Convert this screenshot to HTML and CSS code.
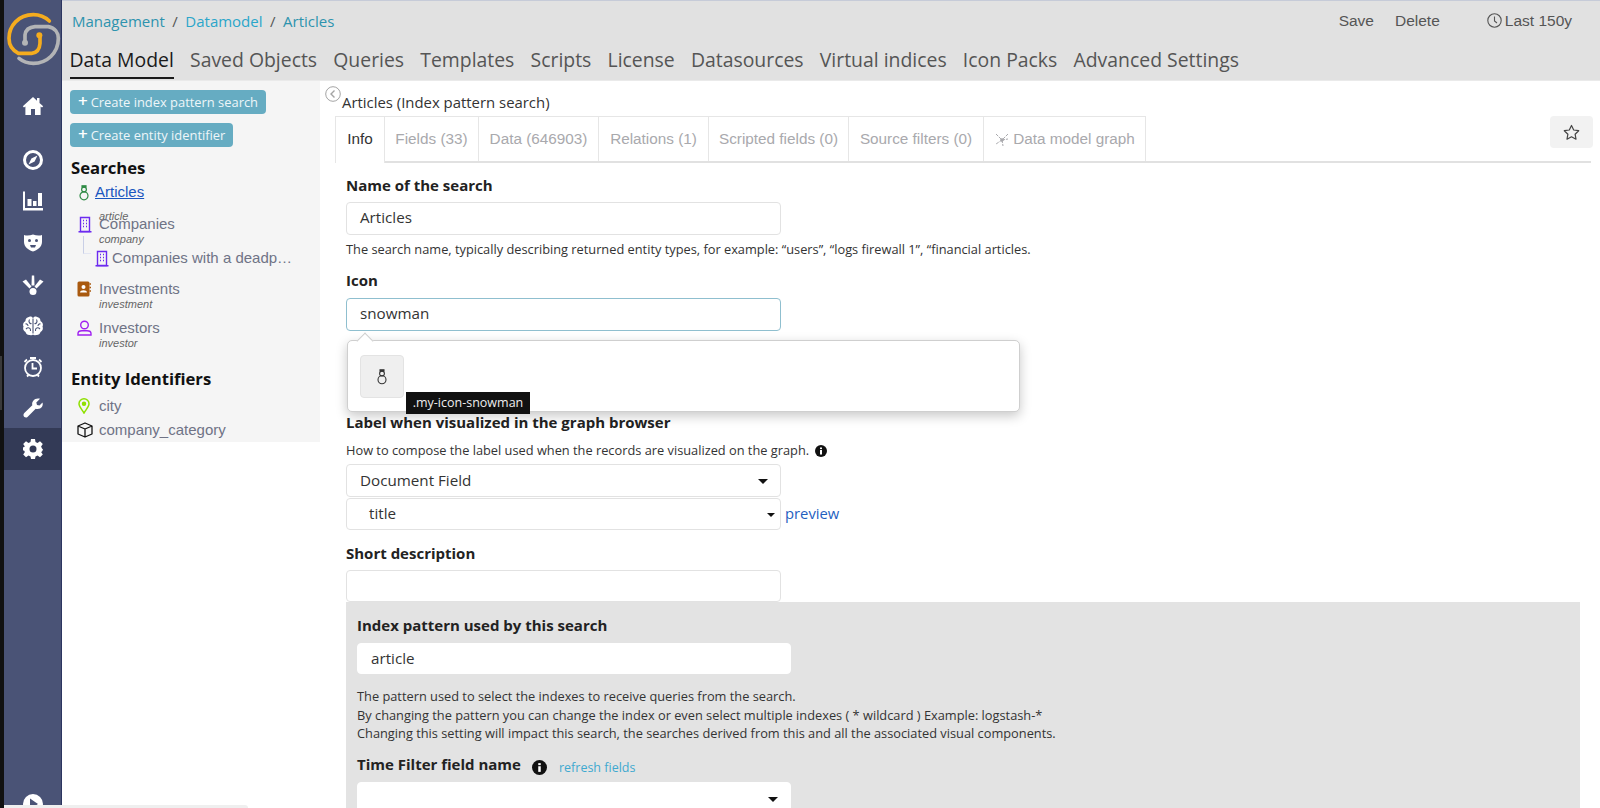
FILE: index.html
```html
<!DOCTYPE html>
<html lang="en">
<head>
<meta charset="utf-8">
<title>Data Model</title>
<link rel="stylesheet" href="styles.css">
</head>
<body>
<div class="app">
  <nav class="nav">
    <div class="logo">
      <svg width="57" height="70" viewBox="12 0 171 210" fill="none" stroke-linecap="round" stroke-linejoin="round">
        <path d="M75 128V105Q78 82 105 80H145C165 84 175 98 175 115C175 160 140 190 100 190C82 190 68 184 57 175" stroke="#b3b4b6" stroke-width="11"/>
        <circle cx="75" cy="128" r="9" fill="#b3b4b6"/>
        <path d="M148 63C133 49 117 44 100 44C55 44 27 78 27 115C27 132 35 150 55 160H95Q118 158 120 130V108" stroke="#f5ac1e" stroke-width="11"/>
        <circle cx="118" cy="106" r="9" fill="#f5ac1e"/>
      </svg>
    </div>
    <a class="nav-item first">
      <svg width="22" height="22" viewBox="0 0 22 22" fill="#fff"><path d="M11 2 0.8 11.2 2 12.6 3.4 11.5V20H9V14H13V20H18.6V11.5L20 12.6 21.2 11.2 17.5 7.9V3H15V5.7Z"/></svg>
    </a>
    <a class="nav-item">
      <svg width="22" height="22" viewBox="0 0 22 22" fill="none"><circle cx="11" cy="11" r="8.5" stroke="#fff" stroke-width="3"/><path d="M15.5 6.5 12.6 12.6 6.5 15.5 9.4 9.4Z" fill="#fff"/></svg>
    </a>
    <a class="nav-item">
      <svg width="22" height="22" viewBox="0 0 22 22" fill="#fff"><path d="M1 1.500H3V18H21V20.500H1Z"/><rect x="5.500" y="9" width="4" height="7"/><rect x="11" y="11" width="3.500" height="5"/><rect x="16" y="3" width="4" height="13"/></svg>
    </a>
    <a class="nav-item">
      <svg width="22" height="22" viewBox="0 0 22 22"><path d="M2 4C5 5 8 4.500 11 3.500C14 4.500 17 5 20 4V11C20 16 15 19.500 11 20.500C7 19.500 2 16 2 11Z" fill="#fff"/><circle cx="7.500" cy="9.500" r="1.500" fill="#4a5376"/><circle cx="14.500" cy="9.500" r="1.500" fill="#4a5376"/><path d="M8 14H14L13 16.500H9Z" fill="#4a5376"/></svg>
    </a>
    <a class="nav-item shifted">
      <svg width="22" height="22" viewBox="0 0 22 22" fill="#fff"><circle cx="11" cy="17.500" r="3.500"/><path d="M9.800 1.500H12.200L12.500 11.500H9.500Z"/><path d="M0.500 7.500 4 5.500 9.500 12.500 7.500 14.500Z"/><path d="M21.500 7.500 18 5.500 12.500 12.500 14.500 14.500Z"/></svg>
    </a>
    <a class="nav-item">
      <svg width="22" height="22" viewBox="0 0 22 22"><path d="M7 2C9 1 10 2 11 3C12 2 13 1 15 2C18 2.500 18.500 4.500 18.500 6C21 7.500 21.500 10 20.500 11.500C21.500 13.500 20.500 16 18.500 17C18 19 16 20.500 14 20C12.500 20.500 11.500 20 11 19.500C10.500 20 9.500 20.500 8 20C6 20.500 4 19 3.500 17C1.500 16 0.500 13.500 1.500 11.500C0.500 10 1 7.500 3.500 6C3.500 4.500 4 2.500 7 2Z" fill="#fff"/><path d="M11 3.500V18.500M7.500 4.500C6 7 8 9 9.500 8.500M3.500 9C5 8.500 6 10 6 11M4 14C6 12 9 12.500 8.500 16M14.500 4.500C16 7 14 9 12.500 8.500M18.500 9C17 8.500 16 10 16 11M18 14C16 12 13 12.500 13.500 16" fill="none" stroke="#4a5376" stroke-width="1.100"/></svg>
    </a>
    <a class="nav-item">
      <svg width="22" height="22" viewBox="0 0 22 22" fill="none" stroke="#fff"><circle cx="11" cy="12" r="8" stroke-width="1.800"/><path d="M10.500 7V12.500H15" stroke-width="1.800"/><path d="M8 2H14M2.500 6 5 3.500M19.500 6 17 3.500M5 20.500 6.500 19M17 20.500 15.500 19" stroke-width="1.800"/></svg>
    </a>
    <a class="nav-item">
      <svg width="22" height="22" viewBox="0 0 22 22" fill="#fff"><path d="M20.500 5.500C21.500 8.500 19.500 12 15.500 12C14.800 12 14.200 11.900 13.700 11.700L5.500 20C4 21.500 1 20 1.500 17.500C1.600 17 1.900 16.500 2.300 16.100L10.300 8.300C9.500 5 12 1.500 16 1.500C16.800 1.500 17.500 1.600 18 1.800L14.300 5.500 15 8 17.500 8.600Z"/></svg>
    </a>
    <a class="nav-item active">
      <svg width="22" height="22" viewBox="0 0 22 22"><path d="M9 1H13L13.500 4 15.500 4.900 18 3.200 20.800 6 19.100 8.500 20 10.500 21 11.500 20 13.500 19.100 14 20.800 16.500 18 19.300 15.500 17.600 13.500 18.500 13 21H9L8.500 18.500 6.500 17.600 4 19.300 1.200 16.500 2.900 14 2 12.500H1V9.500L2.900 8.500 1.200 6 4 3.200 6.500 4.900 8.500 4Z" fill="#fff"/><circle cx="11" cy="11" r="3.500" fill="#333a56"/></svg>
    </a>
    <a class="nav-play">
      <svg width="20" height="20" viewBox="0 0 20 20"><circle cx="10" cy="10" r="10" fill="#fff"/><path d="M7 4.500 15 10 7 15.500Z" fill="#4a5376"/></svg>
    </a>
  </nav>

  <div class="page">
    <header class="top">
      <div class="top-row">
        <div class="crumbs">
          <a class="crumb">Management</a><span class="sep">/</span><a class="crumb bright">Datamodel</a><span class="sep">/</span><a class="crumb">Articles</a>
        </div>
        <div class="actions">
          <span class="action">Save</span>
          <span class="action">Delete</span>
          <span class="action time">
            <svg width="15" height="15" viewBox="0 0 15 15" fill="none" stroke="#555"><circle cx="7.500" cy="7.500" r="6.700" stroke-width="1.100"/><path d="M7.500 3.500V8L10 10" stroke-width="1.100"/></svg>
            Last 150y
          </span>
        </div>
      </div>
      <div class="top-tabs">
        <a class="top-tab current">Data Model</a>
        <a class="top-tab">Saved Objects</a>
        <a class="top-tab">Queries</a>
        <a class="top-tab">Templates</a>
        <a class="top-tab">Scripts</a>
        <a class="top-tab">License</a>
        <a class="top-tab">Datasources</a>
        <a class="top-tab">Virtual indices</a>
        <a class="top-tab">Icon Packs</a>
        <a class="top-tab">Advanced Settings</a>
      </div>
    </header>

    <div class="body">
      <aside class="side">
        <a class="btn"><span class="plus">+</span>Create index pattern search</a>
        <a class="btn second"><span class="plus">+</span>Create entity identifier</a>
        <h2 class="side-title">Searches</h2>
        <div class="entry e-articles">
          <svg class="ico" width="14" height="17" viewBox="0 0 14 17" fill="none" stroke="#2f8b45" stroke-width="1.200"><circle cx="7" cy="5.500" r="2.400"/><circle cx="7" cy="11.800" r="4"/><path d="M5 1.800H9V3H5Z" fill="#2f8b45"/></svg>
          <a class="entry-link">Articles</a>
          <span class="entry-sub s-article">article</span>
        </div>
        <div class="entry e-companies">
          <svg class="ico" width="14" height="17" viewBox="0 0 14 17" fill="none" stroke="#6c2bf0" stroke-width="1.400"><path d="M2.500 1.500H11.500V15.500H2.500Z"/><path d="M0.500 15.800H13.500M5 4.500H6M8 4.500H9M5 7.500H6M8 7.500H9M5 10.500H6M8 10.500H9" /></svg>
          <span class="entry-name">Companies</span>
          <span class="entry-sub s-company">company</span>
        </div>
        <div class="entry child">
          <span class="branch"></span>
          <svg class="ico" width="14" height="17" viewBox="0 0 14 17" fill="none" stroke="#6c2bf0" stroke-width="1.400"><path d="M2.500 1.500H11.500V15.500H2.500Z"/><path d="M0.500 15.800H13.500M5 4.500H6M8 4.500H9M5 7.500H6M8 7.500H9M5 10.500H6M8 10.500H9" /></svg>
          <span class="entry-name">Companies with a deadp…</span>
        </div>
        <div class="entry e-invest">
          <svg class="ico" width="14" height="16" viewBox="0 0 14 16"><rect x="0.500" y="0.500" width="12" height="15" rx="1.500" fill="#a9590f"/><circle cx="6.500" cy="6" r="2" fill="#fff"/><path d="M3 11.500C3 8.500 10 8.500 10 11.500Z" fill="#fff"/><path d="M12.500 3H14M12.500 6.500H14M12.500 10H14" stroke="#a9590f" stroke-width="1.300"/></svg>
          <span class="entry-name">Investments</span>
          <span class="entry-sub">investment</span>
        </div>
        <div class="entry e-investors">
          <svg class="ico" width="15" height="16" viewBox="0 0 15 16" fill="none" stroke="#a020f0" stroke-width="1.400"><circle cx="7.500" cy="5" r="3.800"/><path d="M1 15V13.500C1 11.500 3 10.800 5 10.800H10C12 10.800 14 11.500 14 13.500V15Z"/></svg>
          <span class="entry-name">Investors</span>
          <span class="entry-sub">investor</span>
        </div>
        <h2 class="side-title entity">Entity Identifiers</h2>
        <div class="entry plain e-city">
          <svg class="ico" width="14" height="16" viewBox="0 0 14 16" fill="none" stroke="#8fe000" stroke-width="1.500"><path d="M7 15C4.500 11 2 8.500 2 5.800A5 5 0 0 1 12 5.800C12 8.500 9.500 11 7 15Z"/><circle cx="7" cy="5.800" r="1.500" fill="#8fe000"/></svg>
          <span class="entry-name">city</span>
        </div>
        <div class="entry plain">
          <svg class="ico" width="16" height="16" viewBox="0 0 16 16" fill="none" stroke="#111" stroke-width="1.300" stroke-linejoin="round"><path d="M8 1 15 4V12L8 15 1 12V4ZM1 4 8 7 15 4M8 7V15"/></svg>
          <span class="entry-name">company_category</span>
        </div>
      </aside>

      <main class="main">
        <svg class="collapse" width="16" height="16" viewBox="0 0 16 16" fill="none" stroke="#a4a4a4"><circle cx="8" cy="8" r="7.300" stroke-width="1"/><path d="M9.500 4.500 6 8 9.500 11.500" stroke-width="1.400"/></svg>
        <div class="title">Articles (Index pattern search)</div>
        <div class="tab-row">
          <div class="tabs">
            <a class="tab on">Info</a>
            <a class="tab t-fields">Fields (33)</a>
            <a class="tab t-data">Data (646903)</a>
            <a class="tab t-rel">Relations (1)</a>
            <a class="tab t-script">Scripted fields (0)</a>
            <a class="tab t-source">Source filters (0)</a>
            <a class="tab t-graph">
              <svg width="16" height="16" viewBox="0 0 16 16" fill="none" stroke="#a9a9ad" stroke-width="1"><path d="M2 3 8 9M14 3 8 9M8 9 2 13M8 9 9 15M8 9 14 8" stroke-dasharray="3 1"/><circle cx="8" cy="9" r="1.300" fill="#a9a9ad"/></svg>
              Data model graph
            </a>
          </div>
          <button class="star" type="button">
            <svg width="17" height="17" viewBox="0 0 17 17" fill="none" stroke="#444" stroke-width="1.200" stroke-linejoin="round"><path d="M8.500 1.500 10.700 6 15.700 6.700 12.100 10.200 13 15.200 8.500 12.800 4 15.200 4.900 10.200 1.300 6.700 6.300 6Z"/></svg>
          </button>
        </div>

        <form class="form">
          <div class="label l-name">Name of the search</div>
          <div class="input">Articles</div>
          <p class="help">The search name, typically describing returned entity types, for example: “users”, “logs firewall 1”, “financial articles.</p>
          <div class="label l-icon">Icon</div>
          <div class="input focus">snowman</div>
          <div class="label l-graph">Label when visualized in the graph browser</div>
          <p class="help h-graph">How to compose the label used when the records are visualized on the graph.
            <svg class="info" width="12" height="12" viewBox="0 0 12 12"><circle cx="6" cy="6" r="6" fill="#111"/><rect x="5" y="5" width="2" height="4.500" fill="#fff"/><rect x="5" y="2.500" width="2" height="1.600" fill="#fff"/></svg>
          </p>
          <div class="input select">Document Field<span class="caret"></span></div>
          <div class="select-row">
            <div class="input select native">title<span class="caret small"></span></div>
            <a class="preview">preview</a>
          </div>
          <div class="label l-short">Short description</div>
          <div class="input short"></div>

          <section class="pattern">
            <div class="label">Index pattern used by this search</div>
            <div class="input flat">article</div>
            <p class="help h-pattern">The pattern used to select the indexes to receive queries from the search.<br>By changing the pattern you can change the index or even select multiple indexes ( * wildcard ) Example: logstash-*<br>Changing this setting will impact this search, the searches derived from this and all the associated visual components.</p>
            <div class="time-row">
              <span class="label inline">Time Filter field name</span>
              <svg class="info" width="15" height="15" viewBox="0 0 12 12"><circle cx="6" cy="6" r="6" fill="#111"/><rect x="5" y="5" width="2" height="4.500" fill="#fff"/><rect x="5" y="2.500" width="2" height="1.600" fill="#fff"/></svg>
              <a class="refresh">refresh fields</a>
            </div>
            <div class="input flat select"><span class="caret"></span></div>
          </section>
        </form>

        <div class="popover">
          <span class="arrow"></span>
          <div class="pick">
            <svg width="14" height="17" viewBox="0 0 14 17" fill="none" stroke="#333" stroke-width="1.100"><circle cx="7" cy="5.500" r="2.400"/><circle cx="7" cy="11.800" r="4"/><path d="M5 1.800H9V3H5Z" fill="#333"/></svg>
          </div>
          <div class="tip">.my-icon-snowman</div>
        </div>
      </main>
    </div>
  </div>
  <div class="dock"></div>
</div>
</body>
</html>
```

FILE: styles.css
```css
* { box-sizing: border-box; }
html, body { margin: 0; height: 100%; overflow: hidden; background: #fff; }
body { font-family: "Open Sans", sans-serif; color: #2d2d2d; }
a { color: inherit; text-decoration: none; }
p { margin: 0; }

.app { position: relative; display: flex; width: 1600px; height: 808px; overflow: hidden; }

/* left nav */
.nav { position: relative; flex: 0 0 61px; height: 808px; display: flex; flex-direction: column; background: #4a5376; border-left: 4px solid #111; border-right: 1px solid #2c3560; }
.nav::before { content: ""; position: absolute; left: -4px; top: 356px; width: 2px; height: 54px; background: #3a3a3a; }
.logo { height: 72px; }
.logo svg { display: block; }
.nav-item { height: 41px; display: flex; align-items: center; justify-content: center; }
.nav-item.first { margin-top: 13px; margin-bottom: 13px; }
.nav-item.shifted { margin-top: 2px; }
.nav-item.active { height: 42px; margin-top: 0; align-items: flex-start; padding-top: 10px; background: #333a56; }
.nav-play { margin-top: auto; margin-bottom: -6px; display: flex; justify-content: center; }
.nav-play svg { display: block; }

/* header */
.page { flex: 1; min-width: 0; display: flex; flex-direction: column; }
.top { height: 81px; flex: none; background: #e1e1e1; border-top: 1px solid #c6cbd8; border-bottom: 1px solid #eaeaea; }
.top-row { height: 40px; display: flex; justify-content: space-between; align-items: center; padding: 0 0 1px 10px; }
.crumbs { font-size: 15px; color: #2d93ae; display: flex; align-items: center; }
.crumb.bright { color: #2ba6ca; }
.sep { margin: 0 7.500px; color: #555; }
.actions { display: flex; align-items: center; font-family: "Liberation Sans", sans-serif; font-size: 15.500px; color: #555; padding-right: 28px; }
.action { margin-left: 21px; }
.action.time { display: flex; align-items: center; gap: 3px; margin-left: 47px; }
.top-tabs { display: flex; gap: 16.200px; padding-left: 7.500px; }
.top-tab { font-size: 19.400px; line-height: 27px; height: 38px; padding-top: 5px; color: #555; }
.top-tab.current { color: #1a1a1a; border-bottom: 2px solid #1a1a1a; }

/* body */
.body { flex: 1; display: flex; min-height: 0; }
.side { flex: 0 0 258px; height: 361px; background: #f5f5f5; padding: 9px 0 0 8px; }
.btn { display: block; width: max-content; height: 24px; line-height: 24px; padding: 0 8px; background: #66acc2; color: #eef6f9; font-size: 12.900px; border-radius: 4px; }
.btn.second { margin-top: 9px; }
.plus { font-size: 17px; font-weight: 600; margin-right: 3px; line-height: 20px; color: #fff; }
.side-title { margin: 9px 0 0; padding-left: 1px; font-size: 16.700px; line-height: 23px; font-weight: 700; color: #111; }
.side-title.entity { margin-top: 9px; }
.entry { position: relative; padding-left: 29px; font-family: "Liberation Sans", sans-serif; font-size: 15px; color: #6f7386; }
.ico { position: absolute; left: 7px; top: 1px; }
.entry-link { display: block; color: #1a56c0; text-decoration: underline; line-height: 18px; margin-left: -4px; }
.entry-name { display: block; line-height: 18px; }
.entry-sub { display: block; font-size: 11px; font-style: italic; line-height: 13px; color: #666; }
.e-articles { height: 32px; margin-top: 4px; }
.s-article { position: absolute; top: 27px; left: 29px; }
.e-companies { height: 34px; }
.e-companies .ico { left: 8px; }
.child { height: 26px; padding-left: 42px; }
.child .ico { left: 25px; }
.branch { position: absolute; left: 13px; top: -13px; width: 8px; height: 18px; border-left: 1px solid #c9cfe6; border-bottom: 1px solid #e3e6f2; }
.e-invest { height: 39px; margin-top: 5px; }
.e-investors { height: 39px; }
.plain { height: 24px; }
.e-city { margin-top: 7px; }

/* main */
.main { position: relative; flex: 1; min-width: 0; padding-top: 12px; }
.collapse { position: absolute; left: 5px; top: 5px; }
.title { font-size: 14.900px; line-height: 19px; height: 20px; padding-left: 22px; color: #333; }
.tab-row { position: relative; margin: 3px 0 0 15px; width: 1256px; border-bottom: 2px solid #e1e1e1; height: 47px; }
.tabs { display: flex; height: 45px; }
.tab { height: 45px; display: flex; align-items: center; justify-content: center; gap: 3px; font-family: "Liberation Sans", sans-serif; font-size: 15.300px; color: #a9a9ad; border: 1px solid #e6e6e6; border-left: 0; border-bottom: 0; }
.tab.on { width: 50px; height: 47px; padding-bottom: 2px; color: #333; background: #fff; border-left: 1px solid #e6e6e6; position: relative; }
.t-fields { width: 94px; }
.t-data { width: 120px; }
.t-rel { width: 110px; }
.t-script { width: 140px; }
.t-source { width: 135px; }
.t-graph { width: 162px; }
.star { position: absolute; right: -2px; top: 0; width: 43px; height: 32px; padding: 0; border: 0; border-radius: 4px; background: #f2f2f2; display: flex; align-items: center; justify-content: center; }

.form { padding-left: 26px; }
.label { font-size: 15px; font-weight: 700; line-height: 19px; height: 20px; color: #222; margin-bottom: 6px; }
.label.inline { display: inline-block; margin: 0; line-height: 20px; }
.l-name { margin-top: 13px; }
.input { width: 435px; height: 33px; line-height: 29px; padding: 0 13px; font-size: 15.200px; color: #333; background: #fff; border: 1px solid #e2e2e2; border-radius: 4px; }
.input.focus { border-color: #8fbfcf; }
.input.short { height: 32px; }
.help { font-size: 12.800px; line-height: 18px; color: #333; margin-top: 5px; }
.l-icon { margin: 13px 0 7px; }
.l-graph { margin: 82px 0 0; }
.h-graph { margin: 8px 0 5px; }
.info { vertical-align: -2px; margin-left: 3px; }
.select { position: relative; line-height: 30px; }
.caret { position: absolute; right: 12px; top: 14px; border: 5px solid transparent; border-top-color: #111; border-bottom: 0; }
.caret.small { right: 5px; top: 14px; border-width: 4px; border-bottom: 0; }
.select-row { display: flex; align-items: center; gap: 4px; margin-top: 1px; }
.native { height: 32px; line-height: 29px; padding-left: 22px; }
.preview { font-size: 14.800px; color: #1f5fbf; margin-bottom: 3px; }
.l-short { margin: 14px 0 6px; }
.pattern { width: 1234px; height: 230px; background: #e3e3e3; padding: 14px 0 0 11px; }
.pattern .label { margin-bottom: 7px; }
.flat { border-color: #fff; width: 434px; height: 31px; line-height: 29px; }
.h-pattern { margin-top: 13px; line-height: 18.700px; }
.time-row { display: flex; align-items: center; margin: 14px 0 5px; height: 20px; }
.time-row .info { margin: 0 12px 0 11px; vertical-align: 0; }
.refresh { font-size: 12.500px; color: #3fa9d0; }

/* icon picker overlay */
.popover { position: absolute; left: 27px; top: 259px; width: 673px; height: 72px; background: #fff; border: 1px solid #cfcfcf; border-radius: 5px; box-shadow: 0 4px 12px rgba(0,0,0,.22); }
.arrow { position: absolute; left: 11px; top: -6px; width: 12px; height: 12px; background: #fff; border-left: 1px solid #cfcfcf; border-top: 1px solid #cfcfcf; transform: rotate(45deg); }
.pick { position: absolute; left: 12px; top: 14px; width: 44px; height: 43px; border-radius: 4px; background: #efefef; border: 1px solid #e3e3e3; display: flex; align-items: center; justify-content: center; }
.tip { position: absolute; left: 58px; top: 51px; width: 124px; height: 22px; line-height: 22px; text-align: center; background: #111; color: #eee; font-size: 12.500px; }

.dock { position: absolute; left: 4px; bottom: 0; width: 244px; height: 3px; background: #efefef; border-top-right-radius: 4px; }
```
